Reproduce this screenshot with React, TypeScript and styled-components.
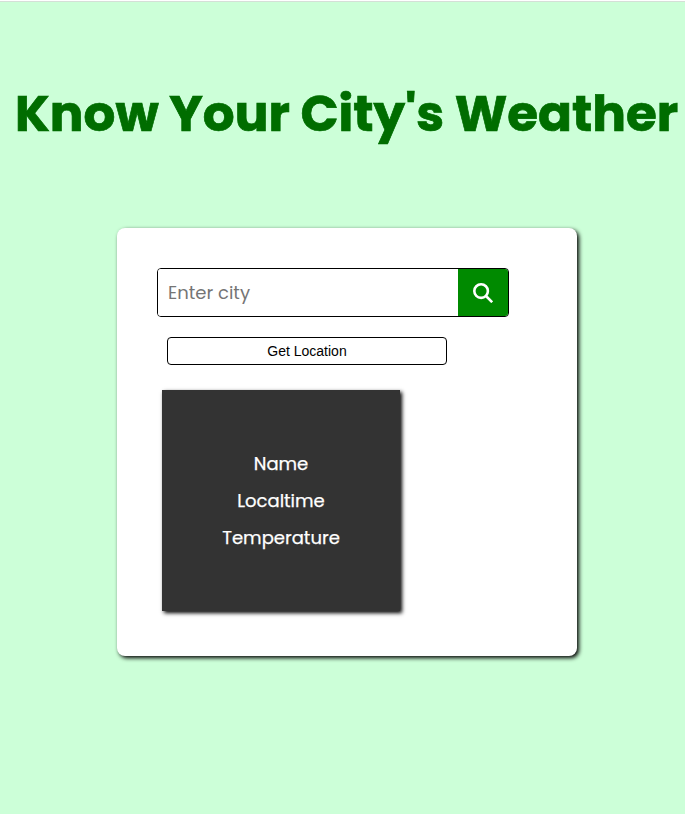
import React from "react";
import styled, { createGlobalStyle } from "styled-components";

const GlobalStyle = createGlobalStyle`
  * { box-sizing: border-box; }
  body { margin: 0; background: #ccffd8; overflow: hidden; font-family: Poppins, "Open Sans", sans-serif; }
`;

const Page = styled.main`
  height: 814px;
  border-top: 1px solid #fff;
  background: #ccffd8;
`;

const Title = styled.h1`
  margin: 0;
  padding: 74px 0 0 15px;
  height: 227px;
  border-top: 1px solid #d5dfd7;
  font-size: 50px;
  line-height: 75px;
  font-weight: 700;
  color: #006d00;
  white-space: nowrap;
  -webkit-text-stroke: 0.7px #006d00;
`;

const Card = styled.section`
  width: 460px;
  height: 428px;
  margin-left: 117px;
  padding: 40px;
  border-radius: 8px;
  background: #fff;
  box-shadow: 2px 2px 4px #000;
`;

const SearchBar = styled.form`
  display: flex;
  width: 352px;
  height: 49px;
  border: 1px solid #000;
  border-radius: 4px;
  overflow: hidden;
`;

const CityInput = styled.input`
  flex: 1;
  min-width: 0;
  padding: 0 10px;
  border: 0;
  outline: 0;
  font: 18px Poppins, "Open Sans", sans-serif;
  &::placeholder { color: #757575; }
`;

const SearchButton = styled.button`
  display: flex;
  align-items: center;
  justify-content: center;
  width: 50px;
  padding: 0;
  border: 0;
  background: #008a00;
  color: #fff;
`;

const LocationButton = styled.button`
  display: block;
  width: 280px;
  height: 28px;
  margin: 20px 0 0 10px;
  padding: 0;
  border: 1px solid #000;
  border-radius: 4px;
  background: #fff;
  color: #000;
  font: 14px "Liberation Sans", Arial, sans-serif;
`;

const WeatherPanel = styled.div`
  display: flex;
  flex-direction: column;
  align-items: center;
  justify-content: center;
  gap: 10px;
  width: 238px;
  height: 221px;
  margin: 25px 0 0 5px;
  background: #333;
  box-shadow: 2px 2px 4px #000;
`;

const Field = styled.p`
  margin: 0;
  color: #fff;
  font-size: 18px;
  line-height: 27px;
  -webkit-text-stroke: 0.25px #fff;
`;

const SearchIcon = () => (
  <svg width="20" height="20" viewBox="0 0 20 20" fill="none" stroke="currentColor" strokeWidth="2.6">
    <circle cx="8.1" cy="8.1" r="6.8" />
    <path d="M13 13L19.2 19.2" />
  </svg>
);

export default function App() {
  return (
    <>
      <GlobalStyle />
      <Page>
        <Title>Know Your City's Weather</Title>
        <Card>
          <SearchBar onSubmit={(e) => e.preventDefault()}>
            <CityInput placeholder="Enter city" />
            <SearchButton type="submit" aria-label="Search"><SearchIcon /></SearchButton>
          </SearchBar>
          <LocationButton type="button">Get Location</LocationButton>
          <WeatherPanel>
            <Field>Name</Field>
            <Field>Localtime</Field>
            <Field>Temperature</Field>
          </WeatherPanel>
        </Card>
      </Page>
    </>
  );
}
